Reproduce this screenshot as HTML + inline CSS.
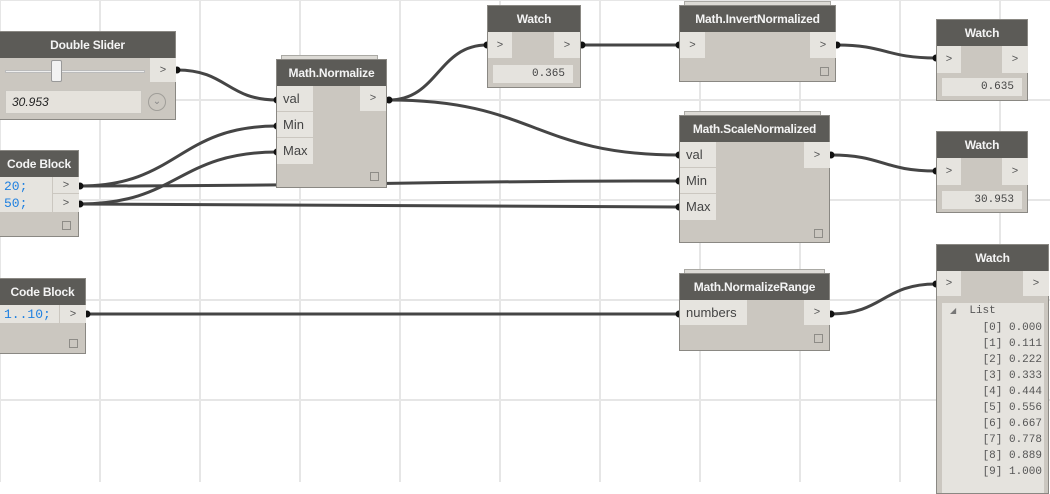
<!DOCTYPE html>
<html><head><meta charset="utf-8"><style>
*{box-sizing:border-box;margin:0;padding:0}
body{width:1050px;height:482px;overflow:hidden;background:#fff;position:relative;font-family:"Liberation Sans",sans-serif}
.grid{position:absolute;inset:0;background-image:linear-gradient(to right,#e6e6e6 2px,transparent 2px),linear-gradient(to bottom,#e6e6e6 2px,transparent 2px);background-size:100px 100px;background-position:-1px -1px}
.n{position:absolute;background:#cbc7c0;border:1px solid #8a8883}
.h{position:absolute;left:0;right:0;top:0;height:26px;background:#5c5b57;color:#f4f4f4;font-weight:bold;font-size:12px;text-align:center;line-height:26px;white-space:nowrap;letter-spacing:-0.2px}
.stk{position:absolute;height:4px;border:1px solid #aaa9a4;border-bottom:none;background:#dcdad5}
.p{position:absolute;background:#e6e4df;color:#444;font-size:13px;line-height:26px;padding-left:6px}
.p.b{border-bottom:1px solid #cbc7c0}
.o{position:absolute;background:#e6e4df;color:#555;font-size:11px;line-height:24px;text-align:center;width:26px}
.cb{position:absolute;width:9px;height:9px;border:1px solid #8e8c87}
.val{position:absolute;background:#e5e3de;font-family:"Liberation Mono",monospace;font-size:11px;color:#444;text-align:right;line-height:18px;padding-right:8px}
.code{position:absolute;font-family:"Liberation Mono",monospace;font-size:13px;color:#1f80e0;line-height:17px}
svg{position:absolute;left:0;top:0}
</style></head><body>
<div class="grid"></div>
<svg width="1050" height="482" fill="none" stroke="#454545" stroke-width="3">
<path d="M177 70 C227 70,227 100,277 100"/>
<path d="M80 186 C178 186,178 126,277 126"/>
<path d="M80 204 C178 204,178 152,277 152"/>
<path d="M80 186 C380 186,380 181,679 181"/>
<path d="M80 204 C380 204,380 207,679 207"/>
<path d="M389 100 C438 100,438 45,487 45"/>
<path d="M389 100 C534 100,534 155,679 155"/>
<path d="M582 45 L679 45"/>
<path d="M837 45 C886 45,886 58,936 58"/>
<path d="M831 155 C883 155,883 171,936 171"/>
<path d="M87 314 L679 314"/>
<path d="M831 314 C883 314,883 284,936 284"/>
<g fill="#111" stroke="none">
<circle cx="177" cy="70" r="3.5"/><circle cx="277" cy="100" r="3.5"/><circle cx="277" cy="126" r="3.5"/><circle cx="277" cy="152" r="3.5"/>
<circle cx="80" cy="186" r="3.5"/><circle cx="80" cy="204" r="3.5"/><circle cx="389" cy="100" r="3.5"/>
<circle cx="487" cy="45" r="3.5"/><circle cx="582" cy="45" r="3.5"/><circle cx="679" cy="45" r="3.5"/><circle cx="837" cy="45" r="3.5"/>
<circle cx="936" cy="58" r="3.5"/><circle cx="679" cy="155" r="3.5"/><circle cx="679" cy="181" r="3.5"/><circle cx="679" cy="207" r="3.5"/>
<circle cx="831" cy="155" r="3.5"/><circle cx="936" cy="171" r="3.5"/><circle cx="87" cy="314" r="3.5"/><circle cx="679" cy="314" r="3.5"/>
<circle cx="831" cy="314" r="3.5"/><circle cx="936" cy="284" r="3.5"/>
</g>
</svg>

<div class="n" style="left:-1px;top:31px;width:177px;height:89px">
<div class="h">Double Slider</div>
<div style="position:absolute;left:5px;top:38px;width:140px;height:3px;background:#eee;border:1px solid #bbb"></div>
<div style="position:absolute;left:51px;top:28px;width:11px;height:22px;background:#f2f2f2;border:1px solid #999;border-radius:2px"></div>
<div class="o" style="left:150px;top:26px;height:24px">&gt;</div>
<div style="position:absolute;left:5px;top:58px;width:137px;height:24px;background:#e5e2dc;border:1px solid #c9c6c0;font-style:italic;font-size:12px;color:#222;line-height:22px;padding-left:6px">30.953</div>
<div style="position:absolute;left:148px;top:61px;width:18px;height:18px;border:1px solid #a09e99;border-radius:50%;color:#888;font-size:10px;text-align:center;line-height:16px">&#8964;</div>
</div>

<div class="stk" style="left:281px;top:55px;width:97px"></div>
<div class="n" style="left:276px;top:59px;width:111px;height:129px">
<div class="h">Math.Normalize</div>
<div class="p b" style="left:0;top:26px;width:36px;height:26px">val</div>
<div class="p b" style="left:0;top:52px;width:36px;height:26px">Min</div>
<div class="p" style="left:0;top:78px;width:36px;height:26px">Max</div>
<div class="o" style="left:83px;top:26px;height:25px">&gt;</div>
<div class="cb" style="left:93px;top:112px"></div>
</div>

<div class="n" style="left:-1px;top:150px;width:80px;height:87px">
<div class="h">Code Block</div>
<div style="position:absolute;left:0;top:26px;width:52px;height:35px;background:#e6e4df"></div>
<div class="code" style="left:4px;top:27px">20;<br>50;</div>
<div class="o" style="left:53px;top:26px;height:17px;line-height:17px;border-bottom:1px solid #cbc7c0">&gt;</div>
<div class="o" style="left:53px;top:43px;height:18px;line-height:18px">&gt;</div>
<div class="cb" style="left:62px;top:70px"></div>
</div>

<div class="n" style="left:-1px;top:278px;width:87px;height:76px">
<div class="h">Code Block</div>
<div style="position:absolute;left:0;top:26px;width:59px;height:18px;background:#e6e4df"></div>
<div class="code" style="left:4px;top:27px">1..10;</div>
<div class="o" style="left:60px;top:26px;height:18px;line-height:18px">&gt;</div>
<div class="cb" style="left:69px;top:60px"></div>
</div>

<div class="n" style="left:487px;top:5px;width:94px;height:83px">
<div class="h">Watch</div>
<div class="o" style="left:0;top:26px;width:24px;height:26px;line-height:26px">&gt;</div>
<div class="o" style="left:66px;top:26px;height:26px;line-height:26px">&gt;</div>
<div class="val" style="left:5px;top:59px;width:80px">0.365</div>
</div>

<div class="stk" style="left:684px;top:1px;width:147px"></div>
<div class="n" style="left:679px;top:5px;width:157px;height:77px">
<div class="h">Math.InvertNormalized</div>
<div class="o" style="left:0;top:26px;width:25px;height:26px;line-height:26px">&gt;</div>
<div class="o" style="left:130px;top:26px;height:26px;line-height:26px">&gt;</div>
<div class="cb" style="left:140px;top:61px"></div>
</div>

<div class="n" style="left:936px;top:19px;width:92px;height:82px">
<div class="h">Watch</div>
<div class="o" style="left:0;top:26px;width:24px;height:27px;line-height:27px">&gt;</div>
<div class="o" style="left:65px;top:26px;height:27px;line-height:27px">&gt;</div>
<div class="val" style="left:5px;top:58px;width:80px">0.635</div>
</div>

<div class="stk" style="left:684px;top:111px;width:137px"></div>
<div class="n" style="left:679px;top:115px;width:151px;height:128px">
<div class="h">Math.ScaleNormalized</div>
<div class="p b" style="left:0;top:26px;width:36px;height:26px">val</div>
<div class="p b" style="left:0;top:52px;width:36px;height:26px">Min</div>
<div class="p" style="left:0;top:78px;width:36px;height:26px">Max</div>
<div class="o" style="left:124px;top:26px;height:26px;line-height:26px">&gt;</div>
<div class="cb" style="left:134px;top:113px"></div>
</div>

<div class="n" style="left:936px;top:131px;width:92px;height:82px">
<div class="h">Watch</div>
<div class="o" style="left:0;top:26px;width:24px;height:27px;line-height:27px">&gt;</div>
<div class="o" style="left:65px;top:26px;height:27px;line-height:27px">&gt;</div>
<div class="val" style="left:5px;top:59px;width:80px">30.953</div>
</div>

<div class="stk" style="left:684px;top:269px;width:141px"></div>
<div class="n" style="left:679px;top:273px;width:151px;height:78px">
<div class="h">Math.NormalizeRange</div>
<div class="p" style="left:0;top:26px;width:67px;height:25px">numbers</div>
<div class="o" style="left:124px;top:26px;height:25px;line-height:25px">&gt;</div>
<div class="cb" style="left:134px;top:60px"></div>
</div>

<div class="n" style="left:936px;top:244px;width:113px;height:250px">
<div class="h">Watch</div>
<div class="o" style="left:0;top:26px;width:24px;height:25px;line-height:25px">&gt;</div>
<div class="o" style="left:86px;top:26px;height:25px;line-height:25px">&gt;</div>
<div style="position:absolute;left:5px;top:58px;width:102px;height:190px;background:#e5e3de;font-family:'Liberation Mono',monospace;font-size:11px;color:#555;line-height:16px">
<div style="padding-left:8px"><span style="font-size:8px;color:#777">&#9698;</span>&nbsp;&nbsp;List</div>
<div style="text-align:right;padding-right:2px">[0] 0.000<br>[1] 0.111<br>[2] 0.222<br>[3] 0.333<br>[4] 0.444<br>[5] 0.556<br>[6] 0.667<br>[7] 0.778<br>[8] 0.889<br>[9] 1.000</div>
</div>
</div>
</body></html>
